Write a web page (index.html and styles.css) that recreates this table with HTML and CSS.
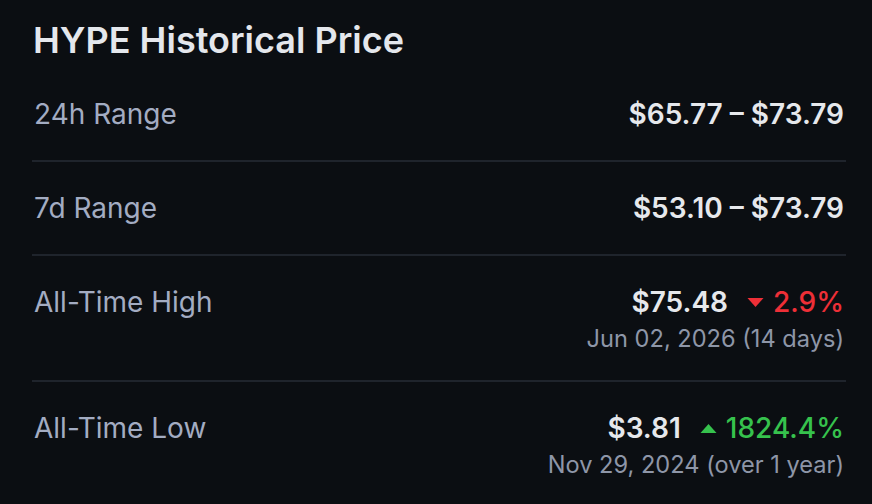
FILE: index.html
```html
<!DOCTYPE html>
<html lang="en">

<head>
    <meta charset="UTF-8">
    <meta name="viewport" content="width=device-width, initial-scale=1.0">
    <title>HYPE Historical Price</title>
    <link rel="stylesheet" href="styles.css">
</head>

<body>
    <div class="card">
        <h2 class="title">HYPE Historical Price</h2>
        <ul class="rows">
            <li class="row">
                <span class="label">24h Range</span>
                <div class="info">
                    <div class="value">$65.77 – $73.79</div>
                </div>
            </li>
            <li class="row">
                <span class="label">7d Range</span>
                <div class="info">
                    <div class="value">$53.10 – $73.79</div>
                </div>
            </li>
            <li class="row">
                <span class="label">All-Time High</span>
                <div class="info">
                    <div class="value">
                        $75.48
                        <span class="change down">
                            <svg class="caret" viewBox="0 0 16 9"><path d="M0 0H16L8 9Z" /></svg>2.9%
                        </span>
                    </div>
                    <div class="date">Jun 02, 2026 (14 days)</div>
                </div>
            </li>
            <li class="row">
                <span class="label">All-Time Low</span>
                <div class="info">
                    <div class="value">
                        $3.81
                        <span class="change up">
                            <svg class="caret" viewBox="0 0 16 9"><path d="M0 9H16L8 0Z" /></svg>1824.4%
                        </span>
                    </div>
                    <div class="date">Nov 29, 2024 (over 1 year)</div>
                </div>
            </li>
        </ul>
    </div>
</body>

</html>
```

FILE: styles.css
```css
* {
    margin: 0;
    padding: 0;
    box-sizing: border-box;
}

body {
    background-color: #0b0e12;
    font-family: 'Inter', 'Noto Sans', sans-serif;
}

li {
    list-style-type: none;
}

.card {
    padding: 19px 26px 0 32px;
}

.card .title {
    font-size: 36px;
    line-height: 43px;
    font-weight: 600;
    color: #e4e7ec;
    padding-left: 1px;
    margin-bottom: 6px;
}

.rows .row {
    display: flex;
    justify-content: space-between;
    align-items: flex-start;
    padding: 25px 2px 25px 2px;
    border-bottom: 2px solid #1f242c;
}

.rows .row:last-child {
    border-bottom: none;
}

.row .label {
    font-size: 28px;
    line-height: 42px;
    color: #a3acc2;
}

.row .info {
    display: flex;
    flex-direction: column;
    align-items: flex-end;
}

.info .value {
    display: flex;
    align-items: center;
    font-size: 28px;
    line-height: 42px;
    font-weight: 600;
    color: #e6e8ec;
}

.info .change {
    display: flex;
    align-items: center;
    margin-left: 19px;
    font-weight: 500;
}

.change .caret {
    width: 17px;
    height: 9px;
    margin-right: 9px;
    fill: currentColor;
}

.change.down {
    color: #ee2f37;
}

.change.up {
    color: #36c24d;
}

.info .date {
    font-size: 23.6px;
    line-height: 32px;
    color: #8e96a8;
}
```
